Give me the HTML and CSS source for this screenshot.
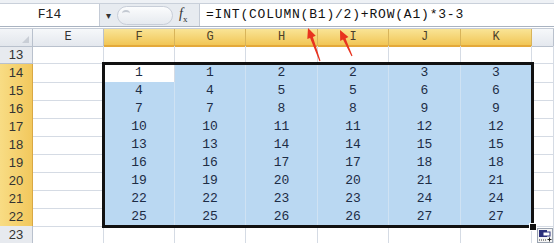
FILE: index.html
```html
<!DOCTYPE html>
<html lang="en">
<head>
  <meta charset="UTF-8">
  <title>Sheet</title>
  <link rel="stylesheet" href="styles.css">
</head>
<body>

<div class="window">
  <div class="topstrip"></div>

  <!-- Formula bar -->
  <div class="formula-bar">
    <div class="namebox">F14</div>
    <div class="drop">&#9662;</div>
    <div class="pill"><span class="pill-dot"></span></div>
    <div class="fx"><i>f</i><sub>x</sub></div>
    <div class="formula">=INT(COLUMN(B1)/2)+ROW(A1)*3-3</div>
  </div>

  <!-- Sheet -->
  <div class="sheet">
    <div class="row head">
      <div class="corner"></div>
      <div class="colhead">E</div>
      <div class="colhead on">F</div>
      <div class="colhead on">G</div>
      <div class="colhead on">H</div>
      <div class="colhead on">I</div>
      <div class="colhead on">J</div>
      <div class="colhead on">K</div>
      <div class="colhead"></div>
    </div>
    <div class="row">
      <div class="rowhead">13</div>
      <div class="cell"></div><div class="cell"></div><div class="cell"></div><div class="cell"></div>
      <div class="cell"></div><div class="cell"></div><div class="cell"></div><div class="cell"></div>
    </div>
    <div class="row">
      <div class="rowhead on">14</div><div class="cell"></div>
      <div class="cell active">1</div><div class="cell sel">1</div><div class="cell sel">2</div>
      <div class="cell sel">2</div><div class="cell sel">3</div><div class="cell sel">3</div><div class="cell"></div>
    </div>
    <div class="row">
      <div class="rowhead on">15</div><div class="cell"></div>
      <div class="cell sel">4</div><div class="cell sel">4</div><div class="cell sel">5</div>
      <div class="cell sel">5</div><div class="cell sel">6</div><div class="cell sel">6</div><div class="cell"></div>
    </div>
    <div class="row">
      <div class="rowhead on">16</div><div class="cell"></div>
      <div class="cell sel">7</div><div class="cell sel">7</div><div class="cell sel">8</div>
      <div class="cell sel">8</div><div class="cell sel">9</div><div class="cell sel">9</div><div class="cell"></div>
    </div>
    <div class="row">
      <div class="rowhead on">17</div><div class="cell"></div>
      <div class="cell sel">10</div><div class="cell sel">10</div><div class="cell sel">11</div>
      <div class="cell sel">11</div><div class="cell sel">12</div><div class="cell sel">12</div><div class="cell"></div>
    </div>
    <div class="row">
      <div class="rowhead on">18</div><div class="cell"></div>
      <div class="cell sel">13</div><div class="cell sel">13</div><div class="cell sel">14</div>
      <div class="cell sel">14</div><div class="cell sel">15</div><div class="cell sel">15</div><div class="cell"></div>
    </div>
    <div class="row">
      <div class="rowhead on">19</div><div class="cell"></div>
      <div class="cell sel">16</div><div class="cell sel">16</div><div class="cell sel">17</div>
      <div class="cell sel">17</div><div class="cell sel">18</div><div class="cell sel">18</div><div class="cell"></div>
    </div>
    <div class="row">
      <div class="rowhead on">20</div><div class="cell"></div>
      <div class="cell sel">19</div><div class="cell sel">19</div><div class="cell sel">20</div>
      <div class="cell sel">20</div><div class="cell sel">21</div><div class="cell sel">21</div><div class="cell"></div>
    </div>
    <div class="row">
      <div class="rowhead on">21</div><div class="cell"></div>
      <div class="cell sel">22</div><div class="cell sel">22</div><div class="cell sel">23</div>
      <div class="cell sel">23</div><div class="cell sel">24</div><div class="cell sel">24</div><div class="cell"></div>
    </div>
    <div class="row">
      <div class="rowhead on">22</div><div class="cell"></div>
      <div class="cell sel">25</div><div class="cell sel">25</div><div class="cell sel">26</div>
      <div class="cell sel">26</div><div class="cell sel">27</div><div class="cell sel">27</div><div class="cell"></div>
    </div>
    <div class="row">
      <div class="rowhead">23</div>
      <div class="cell"></div><div class="cell"></div><div class="cell"></div><div class="cell"></div>
      <div class="cell"></div><div class="cell"></div><div class="cell"></div><div class="cell"></div>
    </div>

    <!-- selection outline, fill handle, paste options -->
    <div class="selection"></div>
    <div class="handle"></div>
    <svg class="paste" width="16" height="15" viewBox="0 0 16 15">
      <rect x="0.5" y="0.5" width="15" height="14" fill="#f4f4f4" stroke="#9aa3b0"/>
      <rect x="2" y="2" width="8" height="7" fill="#2b2f7a"/>
      <rect x="6" y="4" width="7" height="4" fill="#fff" stroke="#2b2f7a"/>
      <path d="M2 12h1M4 12h1M6 12h1M8 12h1" stroke="#333"/>
      <path d="M12.5 9.5v4M10.5 11.5h4" stroke="#222"/>
    </svg>
  </div>

  <!-- annotation arrows -->
  <svg class="arrows" width="554" height="243" viewBox="0 0 554 243">
    <polygon fill="#e8331f" points="308,28 315.7,35.8 312.9,36.9 320.5,60.8 319.5,61.2 310.1,37.9 307.3,39"/>
    <polygon fill="#e8331f" points="340,30 348.4,37.1 345.6,38.4 352.5,55.8 351.5,56.2 343,39.6 340.2,41"/>
  </svg>
</div>

</body>
</html>
```

FILE: styles.css
```css
body {
  margin: 0;
  background: #fff;
  font-family: "Liberation Mono", monospace;
}
.window {
  position: relative;
  width: 554px;
  height: 243px;
  overflow: hidden;
  background: #fff;
}
.topstrip {
  height: 4px;
  background: #eef1f5;
  border-bottom: 1px solid #c9d0da;
  box-sizing: border-box;
}
.formula-bar {
  display: flex;
  align-items: center;
  height: 23px;
  background: #e7ebf0;
  border-bottom: 1px solid #a9b3c1;
  box-sizing: border-box;
}
.namebox {
  width: 100px;
  height: 22px;
  line-height: 22px;
  background: #fff;
  border-right: 1px solid #c4cbd6;
  box-sizing: border-box;
  text-align: center;
  font-size: 13px;
  color: #222;
}
.drop {
  width: 17px;
  text-align: center;
  font-size: 10px;
  color: #333;
  font-family: "DejaVu Sans", sans-serif;
}
.pill {
  width: 56px;
  height: 19px;
  border-radius: 10px;
  border: 1px solid #c8ced8;
  background: linear-gradient(#fbfcfd, #e6eaef);
  box-sizing: border-box;
  position: relative;
}
.pill-dot {
  position: absolute;
  left: 4px;
  top: 3px;
  width: 8px;
  height: 5px;
  border-top: 2px solid #c3c9d2;
  border-radius: 50%;
}
.fx {
  width: 20px;
  padding-left: 6px;
  font-family: "Liberation Serif", serif;
  font-size: 14px;
  color: #333;
}
.fx sub {
  font-size: 9px;
}
.formula {
  flex: 1;
  height: 22px;
  line-height: 22px;
  background: #fff;
  border-left: 1px solid #c4cbd6;
  padding-left: 6px;
  font-size: 13px;
  letter-spacing: 0.8px;
  color: #111;
}
.sheet {
  margin-top: 1px;
  border-top: 1px solid #c5ccd7;
}
.row {
  display: grid;
  grid-template-columns: 33px 71px 71px 71px 72px 71px 72px 71px 22px;
  height: 18px;
}
.row.head {
  height: 17px;
}
.corner,
.colhead,
.rowhead,
.cell {
  box-sizing: border-box;
  border-right: 1px solid #d5dbe4;
  border-bottom: 1px solid #d5dbe4;
  text-align: center;
}
.corner {
  background: linear-gradient(#f3f5f8, #e2e6ec);
  border-color: #b9c1cd;
  position: relative;
}
.corner::after {
  content: "";
  position: absolute;
  right: 3px;
  bottom: 3px;
  border-left: 7px solid transparent;
  border-bottom: 7px solid #c9ced6;
}
.colhead {
  background: linear-gradient(#f6f8fa, #e4e8ee);
  border-color: #b9c1cd;
  font-size: 12px;
  line-height: 16px;
  color: #333;
}
.colhead.on {
  background: linear-gradient(#f9e496, #f1c656);
  border-right-color: #d8b45a;
  border-bottom: 2px solid #e4a93a;
  color: #4a3f2a;
}
.rowhead {
  background: #e7eaef;
  border-color: #b9c1cd;
  font-family: "Liberation Sans", sans-serif;
  font-size: 13px;
  line-height: 17px;
  color: #333;
}
.rowhead.on {
  background: linear-gradient(90deg, #f8dc84, #f2c85d);
  border-right: 1px solid #d9a844;
  border-bottom-color: #d7b368;
}
.cell {
  font-size: 13px;
  line-height: 18px;
  color: #1d2c45;
}
.cell.sel {
  background: #bad8f2;
  border-color: #cfe2f3;
}
.cell.active {
  background: #fff;
}
.selection {
  position: absolute;
  left: 102px;
  top: 62px;
  width: 432px;
  height: 166px;
  border: 3px solid #111;
  box-sizing: border-box;
}
.handle {
  position: absolute;
  left: 529px;
  top: 223px;
  width: 6px;
  height: 6px;
  background: #111;
  border: 1px solid #fff;
}
.paste {
  position: absolute;
  left: 537px;
  top: 228px;
}
.arrows {
  position: absolute;
  left: 0;
  top: 0;
  pointer-events: none;
}
```
